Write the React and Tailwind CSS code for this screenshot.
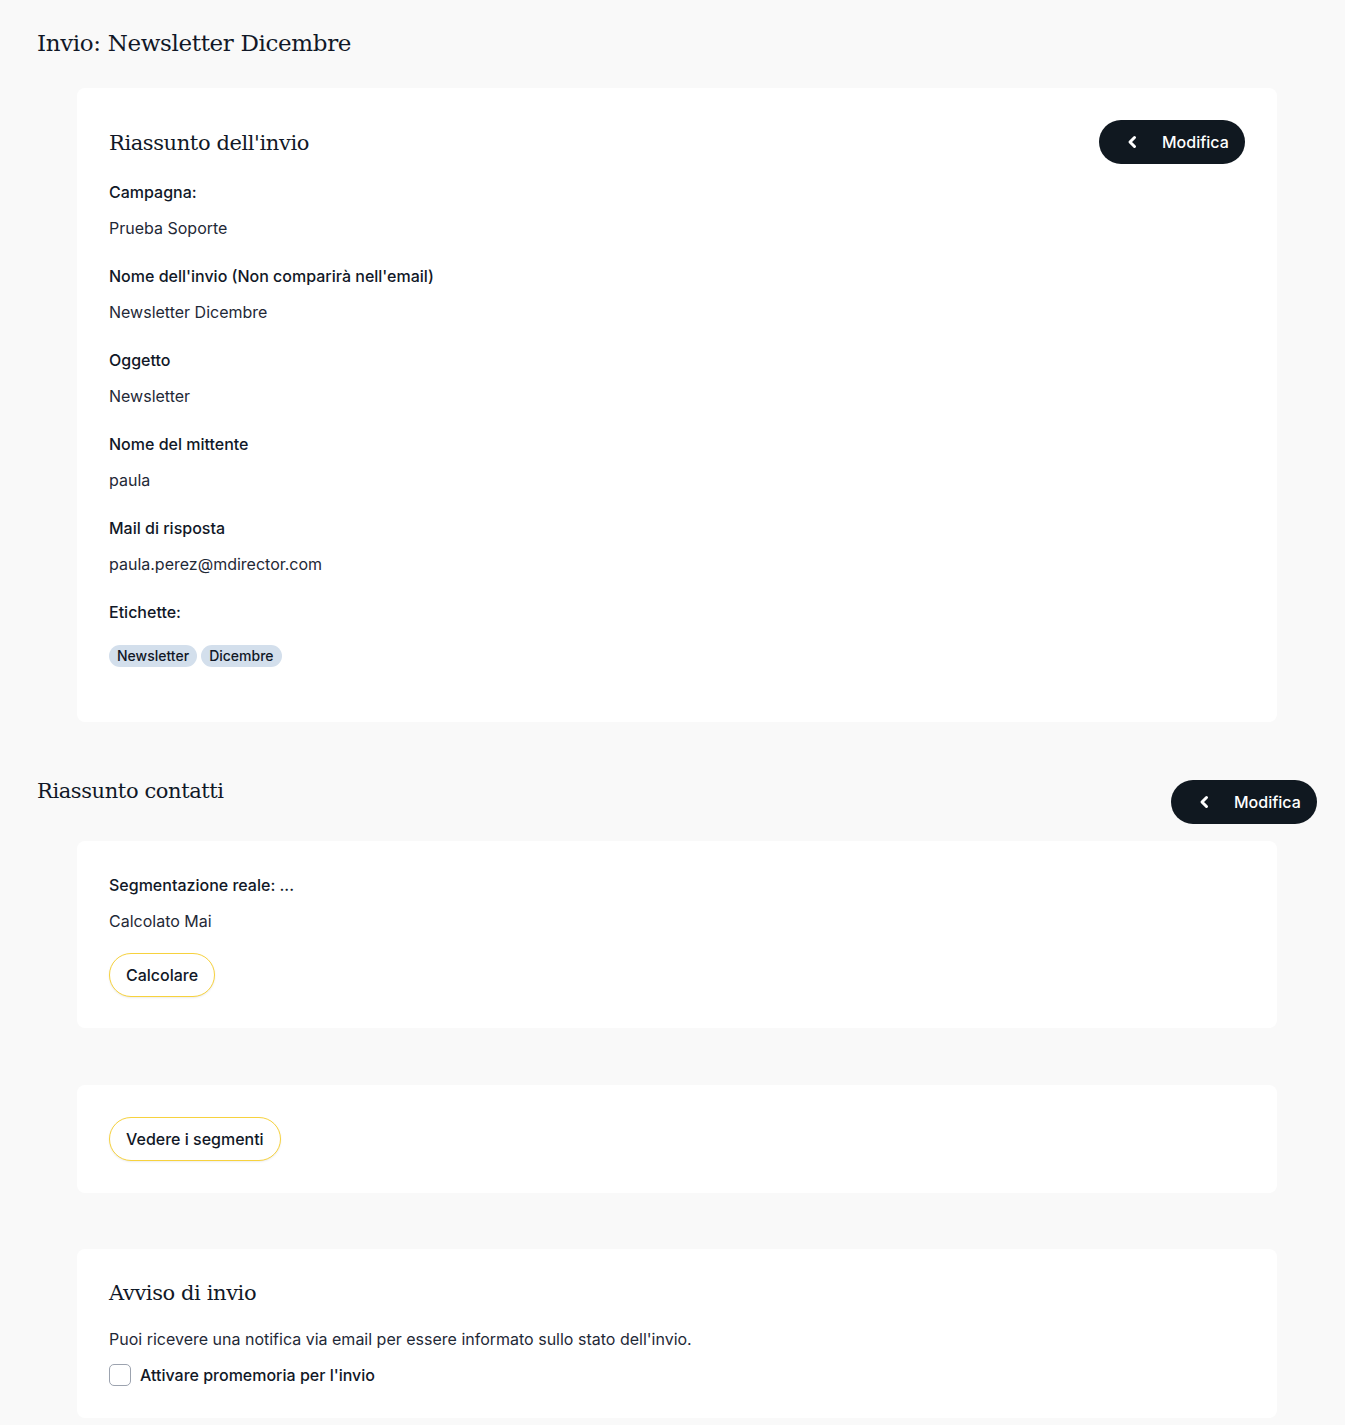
import React from "react";

const serif = "font-['DejaVu_Serif','Liberation_Serif',serif]";

function Chevron() {
  return (
    <svg width="10" height="14" viewBox="0 0 10 14" fill="none">
      <path d="M7.5 2.5 L3 7 L7.5 11.5" stroke="white" strokeWidth="3" strokeLinecap="round" strokeLinejoin="round" />
    </svg>
  );
}

function ModificaButton() {
  return (
    <button className="flex h-[44px] w-[146px] items-center rounded-full bg-[#101820] pl-[28px] text-[16px] font-medium text-white">
      <Chevron />
      <span className="ml-[25px]">Modifica</span>
    </button>
  );
}

function Field({ label, value, first }) {
  return (
    <div className={first ? "" : "mt-[24px]"}>
      <div className="text-[16px] font-medium leading-[24px] text-[#111827]">{label}</div>
      <div className="mt-[12px] text-[16px] leading-[24px] text-[#1f2937]">{value}</div>
    </div>
  );
}

function OutlineButton({ children }) {
  return (
    <button className="h-[44px] rounded-full border border-[#f7d23e] bg-white px-[16px] text-[16px] font-medium text-[#111827] shadow-[0_1px_2px_rgba(0,0,0,0.08)]">
      {children}
    </button>
  );
}

export default function App() {
  return (
    <div className="min-h-[1425px] bg-[#f9f9f9] pl-[37px] pr-[28px] pt-[28px] font-['Inter','Liberation_Sans',sans-serif]">
      <h1 className={`${serif} text-[23px] leading-[30px] tracking-[-0.35px] text-[#111827]`}>Invio: Newsletter Dicembre</h1>

      <div className="ml-[40px] mr-[40px] mt-[30px] rounded-lg bg-white px-[32px] pb-[55px] pt-[32px]">
        <div className="flex items-center justify-between">
          <h2 className={`${serif} pt-[4px] text-[21px] tracking-[-0.4px] text-[#111827]`}>Riassunto dell'invio</h2>
          <ModificaButton />
        </div>
        <div className="mt-[16px]">
          <Field first label="Campagna:" value="Prueba Soporte" />
          <Field label="Nome dell'invio (Non comparirà nell'email)" value="Newsletter Dicembre" />
          <Field label="Oggetto" value="Newsletter" />
          <Field label="Nome del mittente" value="paula" />
          <Field label="Mail di risposta" value="paula.perez@mdirector.com" />
          <div className="mt-[24px] text-[16px] font-medium leading-[24px] text-[#111827]">Etichette:</div>
          <div className="mt-[21px] flex gap-[4px]">
            <span className="rounded-full bg-[#d3dfec] px-[8px] text-[14px] font-medium leading-[22px] text-[#111827]">Newsletter</span>
            <span className="rounded-full bg-[#d3dfec] px-[8px] text-[14px] font-medium leading-[22px] text-[#111827]">Dicembre</span>
          </div>
        </div>
      </div>

      <div className="mt-[54px] flex items-start justify-between">
        <h2 className={`${serif} text-[21px] leading-[30px] tracking-[-0.4px] text-[#111827]`}>Riassunto contatti</h2>
        <div className="mt-[4px]">
          <ModificaButton />
        </div>
      </div>

      <div className="ml-[40px] mr-[40px] mt-[17px] rounded-lg bg-white px-[32px] pb-[31px] pt-[32px]">
        <div className="text-[16px] font-medium leading-[24px] text-[#111827]">Segmentazione reale: ...</div>
        <div className="mt-[12px] text-[16px] leading-[24px] text-[#1f2937]">Calcolato Mai</div>
        <div className="mt-[20px]">
          <OutlineButton>Calcolare</OutlineButton>
        </div>
      </div>

      <div className="ml-[40px] mr-[40px] mt-[57px] rounded-lg bg-white p-[32px]">
        <OutlineButton>Vedere i segmenti</OutlineButton>
      </div>

      <div className="ml-[40px] mr-[40px] mt-[56px] rounded-lg bg-white px-[32px] pb-[31px] pt-[31px]">
        <h2 className={`${serif} text-[21px] leading-[26px] tracking-[-0.4px] text-[#111827]`}>Avviso di invio</h2>
        <p className="mt-[21px] text-[16px] leading-[24px] text-[#1f2937]">
          Puoi ricevere una notifica via email per essere informato sullo stato dell'invio.
        </p>
        <label className="mt-[12px] flex items-center gap-[9px]">
          <span className="h-[22px] w-[22px] rounded-[5px] border border-[#9ca3af] bg-white" />
          <span className="text-[16px] font-medium leading-[24px] text-[#111827]">Attivare promemoria per l'invio</span>
        </label>
      </div>
    </div>
  );
}
